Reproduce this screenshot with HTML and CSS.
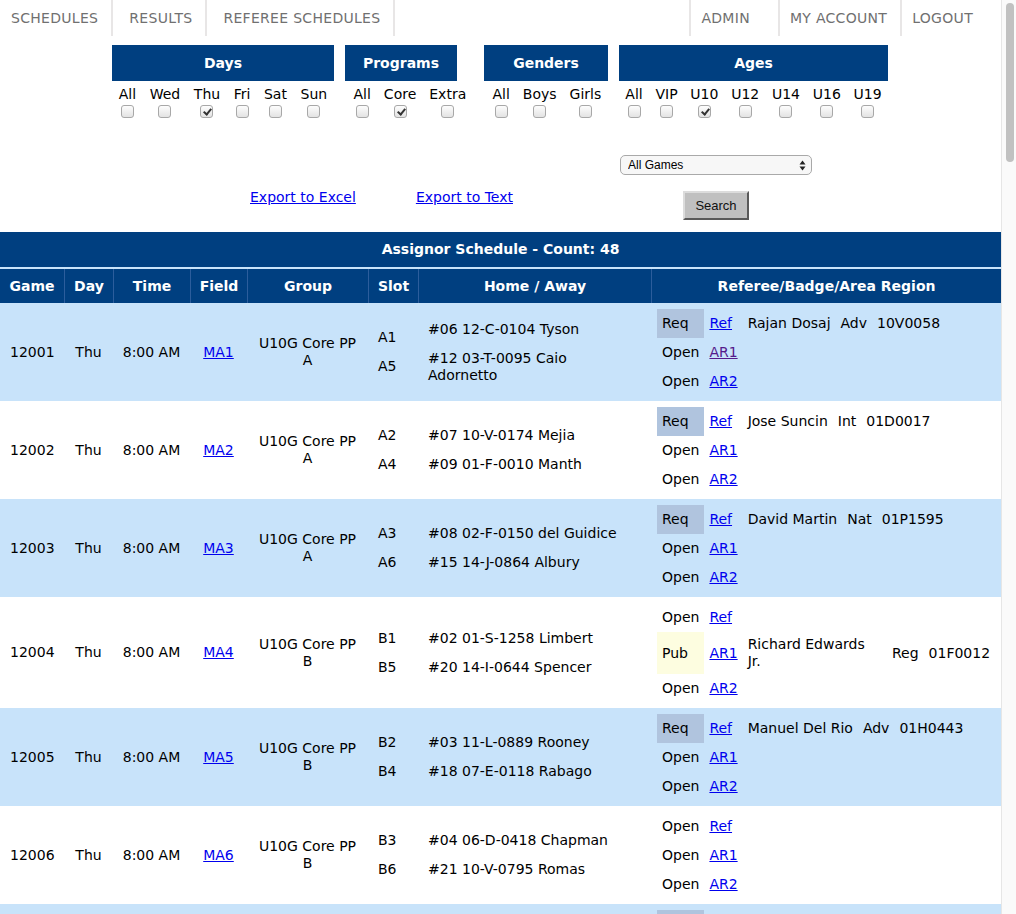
FILE: index.html
```html
<!DOCTYPE html>
<html>
<head>
<meta charset="utf-8">
<title>Assignor Schedule</title>
<link rel="stylesheet" href="styles.css">
</head>
<body>
<div class="page">
<nav class="nav">
  <div class="nav-left">
    <a class="nav-item nav-first">SCHEDULES</a>
    <a class="nav-item">RESULTS</a>
    <a class="nav-item">REFEREE SCHEDULES</a>
  </div>
  <div class="nav-right">
    <a class="nav-ritem nav-admin">ADMIN</a>
    <a class="nav-ritem">MY ACCOUNT</a>
    <a class="nav-ritem nav-last">LOGOUT</a>
  </div>
</nav>

<section class="filters">
  <div class="group g-days">
    <div class="group-head">Days</div>
    <div class="opts">
      <label class="opt"><span>All</span><input type="checkbox" class="cb"></label>
      <label class="opt"><span>Wed</span><input type="checkbox" class="cb"></label>
      <label class="opt"><span>Thu</span><input type="checkbox" class="cb" checked></label>
      <label class="opt"><span>Fri</span><input type="checkbox" class="cb"></label>
      <label class="opt"><span>Sat</span><input type="checkbox" class="cb"></label>
      <label class="opt"><span>Sun</span><input type="checkbox" class="cb"></label>
    </div>
  </div>
  <div class="group g-programs">
    <div class="group-head">Programs</div>
    <div class="opts opts-start">
      <label class="opt"><span>All</span><input type="checkbox" class="cb"></label>
      <label class="opt"><span>Core</span><input type="checkbox" class="cb" checked></label>
      <label class="opt"><span>Extra</span><input type="checkbox" class="cb"></label>
    </div>
  </div>
  <div class="group g-genders">
    <div class="group-head">Genders</div>
    <div class="opts opts-start">
      <label class="opt"><span>All</span><input type="checkbox" class="cb"></label>
      <label class="opt"><span>Boys</span><input type="checkbox" class="cb"></label>
      <label class="opt"><span>Girls</span><input type="checkbox" class="cb"></label>
    </div>
  </div>
  <div class="group g-ages">
    <div class="group-head">Ages</div>
    <div class="opts">
      <label class="opt"><span>All</span><input type="checkbox" class="cb"></label>
      <label class="opt"><span>VIP</span><input type="checkbox" class="cb"></label>
      <label class="opt"><span>U10</span><input type="checkbox" class="cb" checked></label>
      <label class="opt"><span>U12</span><input type="checkbox" class="cb"></label>
      <label class="opt"><span>U14</span><input type="checkbox" class="cb"></label>
      <label class="opt"><span>U16</span><input type="checkbox" class="cb"></label>
      <label class="opt"><span>U19</span><input type="checkbox" class="cb"></label>
    </div>
  </div>
</section>

<section class="actions">
  <div class="links">
    <a href="#" class="export">Export to Excel</a>
    <a href="#" class="export">Export to Text</a>
  </div>
  <div class="search-col">
    <div class="select-wrap">
      <select class="select"><option>All Games</option></select>
      <svg class="select-arrow" width="7" height="11" viewBox="0 0 7 11"><path d="M0.5 4.5 L3.5 0.5 L6.5 4.5 Z M0.5 6.5 L3.5 10.5 L6.5 6.5 Z" fill="#222"/></svg>
    </div>
    <button class="search-btn">Search</button>
  </div>
</section>

<table class="sched">
  <colgroup>
    <col class="c-game"><col class="c-day"><col class="c-time"><col class="c-field"><col class="c-group"><col class="c-slot"><col class="c-teams"><col class="c-ref">
  </colgroup>
  <thead>
    <tr><th colspan="8" class="title">Assignor Schedule - Count: 48</th></tr>
    <tr class="heads">
      <th>Game</th><th>Day</th><th>Time</th><th>Field</th><th>Group</th><th>Slot</th><th>Home / Away</th><th>Referee/Badge/Area Region</th>
    </tr>
  </thead>
  <tbody>
    <tr class="alt">
      <td class="ctr">12001</td><td class="ctr">Thu</td><td class="ctr tm">8:00 AM</td><td class="ctr"><a href="#">MA1</a></td>
      <td class="ctr">U10G Core PP<br>A</td>
      <td class="slots"><div class="it">A1</div><div class="it">A5</div></td>
      <td class="teams"><div class="it">#06 12-C-0104 Tyson</div><div class="it">#12 03-T-0095 Caio Adornetto</div></td>
      <td class="refs"><table class="rt">
        <tr><td class="st req">Req</td><td><a href="#">Ref</a></td><td>Rajan Dosaj</td><td>Adv</td><td>10V0058</td></tr>
        <tr><td class="st">Open</td><td><a href="#" class="visited">AR1</a></td><td></td><td></td><td></td></tr>
        <tr><td class="st">Open</td><td><a href="#">AR2</a></td><td></td><td></td><td></td></tr>
      </table></td>
    </tr>
    <tr>
      <td class="ctr">12002</td><td class="ctr">Thu</td><td class="ctr tm">8:00 AM</td><td class="ctr"><a href="#">MA2</a></td>
      <td class="ctr">U10G Core PP<br>A</td>
      <td class="slots"><div class="it">A2</div><div class="it">A4</div></td>
      <td class="teams"><div class="it">#07 10-V-0174 Mejia</div><div class="it">#09 01-F-0010 Manth</div></td>
      <td class="refs"><table class="rt">
        <tr><td class="st req">Req</td><td><a href="#">Ref</a></td><td>Jose Suncin</td><td>Int</td><td>01D0017</td></tr>
        <tr><td class="st">Open</td><td><a href="#">AR1</a></td><td></td><td></td><td></td></tr>
        <tr><td class="st">Open</td><td><a href="#">AR2</a></td><td></td><td></td><td></td></tr>
      </table></td>
    </tr>
    <tr class="alt">
      <td class="ctr">12003</td><td class="ctr">Thu</td><td class="ctr tm">8:00 AM</td><td class="ctr"><a href="#">MA3</a></td>
      <td class="ctr">U10G Core PP<br>A</td>
      <td class="slots"><div class="it">A3</div><div class="it">A6</div></td>
      <td class="teams"><div class="it">#08 02-F-0150 del Guidice</div><div class="it">#15 14-J-0864 Albury</div></td>
      <td class="refs"><table class="rt">
        <tr><td class="st req">Req</td><td><a href="#">Ref</a></td><td>David Martin</td><td>Nat</td><td>01P1595</td></tr>
        <tr><td class="st">Open</td><td><a href="#">AR1</a></td><td></td><td></td><td></td></tr>
        <tr><td class="st">Open</td><td><a href="#">AR2</a></td><td></td><td></td><td></td></tr>
      </table></td>
    </tr>
    <tr>
      <td class="ctr">12004</td><td class="ctr">Thu</td><td class="ctr tm">8:00 AM</td><td class="ctr"><a href="#">MA4</a></td>
      <td class="ctr">U10G Core PP<br>B</td>
      <td class="slots"><div class="it">B1</div><div class="it">B5</div></td>
      <td class="teams"><div class="it">#02 01-S-1258 Limbert</div><div class="it">#20 14-I-0644 Spencer</div></td>
      <td class="refs"><table class="rt">
        <tr><td class="st">Open</td><td><a href="#">Ref</a></td><td></td><td></td><td></td></tr>
        <tr><td class="st pub">Pub</td><td><a href="#">AR1</a></td><td class="nm">Richard Edwards Jr.</td><td class="bd">Reg</td><td>01F0012</td></tr>
        <tr><td class="st">Open</td><td><a href="#">AR2</a></td><td></td><td></td><td></td></tr>
      </table></td>
    </tr>
    <tr class="alt">
      <td class="ctr">12005</td><td class="ctr">Thu</td><td class="ctr tm">8:00 AM</td><td class="ctr"><a href="#">MA5</a></td>
      <td class="ctr">U10G Core PP<br>B</td>
      <td class="slots"><div class="it">B2</div><div class="it">B4</div></td>
      <td class="teams"><div class="it">#03 11-L-0889 Rooney</div><div class="it">#18 07-E-0118 Rabago</div></td>
      <td class="refs"><table class="rt">
        <tr><td class="st req">Req</td><td><a href="#">Ref</a></td><td>Manuel Del Rio</td><td>Adv</td><td>01H0443</td></tr>
        <tr><td class="st">Open</td><td><a href="#">AR1</a></td><td></td><td></td><td></td></tr>
        <tr><td class="st">Open</td><td><a href="#">AR2</a></td><td></td><td></td><td></td></tr>
      </table></td>
    </tr>
    <tr>
      <td class="ctr">12006</td><td class="ctr">Thu</td><td class="ctr tm">8:00 AM</td><td class="ctr"><a href="#">MA6</a></td>
      <td class="ctr">U10G Core PP<br>B</td>
      <td class="slots"><div class="it">B3</div><div class="it">B6</div></td>
      <td class="teams"><div class="it">#04 06-D-0418 Chapman</div><div class="it">#21 10-V-0795 Romas</div></td>
      <td class="refs"><table class="rt">
        <tr><td class="st">Open</td><td><a href="#">Ref</a></td><td></td><td></td><td></td></tr>
        <tr><td class="st">Open</td><td><a href="#">AR1</a></td><td></td><td></td><td></td></tr>
        <tr><td class="st">Open</td><td><a href="#">AR2</a></td><td></td><td></td><td></td></tr>
      </table></td>
    </tr>
    <tr class="alt">
      <td class="ctr">12007</td><td class="ctr">Thu</td><td class="ctr tm">9:30 AM</td><td class="ctr"><a href="#">MA1</a></td>
      <td class="ctr">U10G Core PP<br>A</td>
      <td class="slots"><div class="it">A5</div><div class="it">A6</div></td>
      <td class="teams"><div class="it">#12 03-T-0095 Adornetto</div><div class="it">#15 14-J-0864 Albury</div></td>
      <td class="refs"><table class="rt">
        <tr><td class="st req">Req</td><td><a href="#">Ref</a></td><td>Rajan Dosaj</td><td>Adv</td><td>10V0058</td></tr>
        <tr><td class="st">Open</td><td><a href="#">AR1</a></td><td></td><td></td><td></td></tr>
        <tr><td class="st">Open</td><td><a href="#">AR2</a></td><td></td><td></td><td></td></tr>
      </table></td>
    </tr>
  </tbody>
</table>
</div>
<div class="vscroll"><div class="vthumb"></div></div>
</body>
</html>
```
FILE: styles.css
```css
html, body {
  margin: 0;
  padding: 0;
  background: #ffffff;
}
body {
  font-family: "DejaVu Sans", Verdana, sans-serif;
  font-size: 14px;
  line-height: 17px;
  color: #000;
}
.page { width: 1001px; }
a { color: #0000ee; text-decoration: underline; }
a.visited { color: #551a8b; }

/* fake overlay scrollbar */
.vscroll {
  position: fixed;
  top: 0;
  right: 0;
  bottom: 0;
  width: 14px;
  background: #fafafa;
  border-left: 1px solid #e6e6e6;
}
.vthumb {
  position: absolute;
  left: 4px;
  top: 3px;
  width: 8px;
  height: 159px;
  border-radius: 4px;
  background: #c1c1c1;
}

/* nav */
.nav {
  display: flex;
  justify-content: space-between;
  height: 36px;
}
.nav-left, .nav-right { display: flex; }
.nav-item, .nav-ritem {
  display: flex;
  align-items: center;
  height: 36px;
  color: #707070;
  text-decoration: none;
  font-size: 14px;
  letter-spacing: 0.3px;
}
.nav-item {
  padding: 0 13px 0 16px;
  border-right: 2px solid #e8e6e6;
}
.nav-first { padding-left: 11px; }
.nav-right { margin-right: 15px; }
.nav-ritem {
  padding: 0 13px 0 10px;
  border-left: 2px solid #e8e6e6;
}
.nav-admin { padding-right: 28px; }

/* filters */
.filters {
  display: flex;
  align-items: flex-start;
  margin-top: 9px;
  padding-left: 112px;
}
.group { display: flex; flex-direction: column; }
.g-days { width: 222px; margin-right: 11px; }
.g-programs { width: 112px; margin-right: 27px; }
.g-genders { width: 124px; margin-right: 11px; }
.g-ages { width: 269px; }
.group-head {
  height: 36px;
  line-height: 36px;
  background: #003f80;
  color: #fff;
  font-weight: bold;
  text-align: center;
}
.opts {
  display: flex;
  justify-content: space-around;
  margin-top: 5px;
}
.opts-start { justify-content: flex-start; padding-left: 2px; }
.opt {
  display: flex;
  flex-direction: column;
  align-items: center;
  padding: 0 6.5px;
  white-space: nowrap;
}
.g-ages .opt, .g-days .opt { padding: 0; }
.cb {
  -webkit-appearance: none;
  appearance: none;
  position: relative;
  width: 13px;
  height: 13px;
  margin: 2px 0 0 0;
  border: 1px solid #a8a8a8;
  border-radius: 3px;
  background: linear-gradient(#fdfdfd, #e3e3e3);
  box-sizing: border-box;
}
.cb:checked::after {
  content: "";
  position: absolute;
  left: 4px;
  top: 1px;
  width: 3px;
  height: 6px;
  border: solid #333;
  border-width: 0 2px 2px 0;
  transform: rotate(40deg);
}

/* actions */
.actions {
  display: flex;
  align-items: flex-start;
  margin-top: 37px;
  padding-left: 250px;
}
.links {
  width: 370px;
  margin-top: 34px;
  display: flex;
}
.export { margin-right: 60px; }
.search-col {
  width: 192px;
  display: flex;
  flex-direction: column;
  align-items: center;
}
.select-wrap {
  position: relative;
  width: 192px;
  height: 20px;
}
.select {
  -webkit-appearance: none;
  appearance: none;
  width: 192px;
  height: 20px;
  margin: 0;
  padding: 0 0 0 7px;
  border: 1px solid #a9a9a9;
  border-radius: 5px;
  background: #f7f7f7;
  font-family: "Liberation Sans", Arial, sans-serif;
  font-size: 12px;
  color: #000;
}
.select-arrow {
  position: absolute;
  right: 6px;
  top: 5px;
  pointer-events: none;
}
.search-btn {
  margin-top: 16px;
  width: 66px;
  height: 29px;
  background: #c0c0c0;
  border: 2px solid;
  border-color: #dcdcdc #5a5a5a #5a5a5a #dcdcdc;
  font-family: "Liberation Sans", Arial, sans-serif;
  font-size: 13px;
  color: #111;
  padding: 0;
}

/* table */
.sched {
  margin-top: 12px;
  width: 1001px;
  table-layout: fixed;
  border-collapse: separate;
  border-spacing: 0;
}
.c-game { width: 64px; }
.c-day { width: 49px; }
.c-time { width: 77px; }
.c-field { width: 57px; }
.c-group { width: 121px; }
.c-slot { width: 50px; }
.c-teams { width: 233px; }
.c-ref { width: 350px; }
.sched th {
  background: #003f80;
  color: #fff;
  font-weight: bold;
  padding: 0;
}
.sched .title {
  height: 35px;
  border-bottom: 2px solid #c8e3fa;
}
.heads th {
  height: 34px;
  border-left: 1px solid #2c5d9c;
}
.heads th:first-child { border-left: none; }
.sched > tbody > tr > td {
  padding: 5px 10px;
  vertical-align: middle;
}
.sched > tbody > tr > td.tm {
  padding-left: 4px;
  padding-right: 4px;
  white-space: nowrap;
}
.sched > tbody > tr > td.teams { padding-right: 18px; }
.sched > tbody > tr.alt > td { background: #c8e3fa; }
.ctr { text-align: center; }
.slots, .teams { text-align: left; }
.it { padding: 6px 0; }
.sched > tbody > tr > td.refs { padding: 6px 6px 5px 6px; }
.rt {
  border-collapse: collapse;
  border-spacing: 0;
}
.rt td {
  padding: 6px 5px;
  vertical-align: middle;
  white-space: normal;
}
.rt td.nm { padding-top: 4px; padding-bottom: 4px; }
.rt .req { background: #b0c4de; }
.rt .pub { background: #fdfde0; }
```
